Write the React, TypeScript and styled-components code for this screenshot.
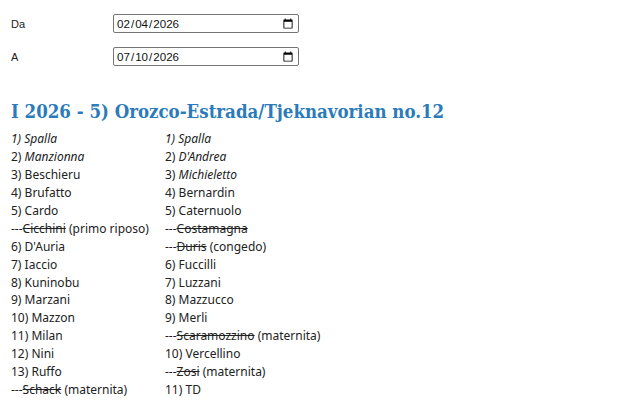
import { createGlobalStyle, styled } from 'styled-components';

const Global = createGlobalStyle`
html, body {
  margin: 0;
  padding: 0;
  background: #fff;
}
body {
  font-family: "Noto Sans", "Open Sans", sans-serif;
  color: #222;
}
`

type Player = { n?: string; name: string; italic?: boolean; out?: boolean; note?: string }

const left: Player[] = [
  { n: '1)', name: 'Spalla', italic: true },
  { n: '2)', name: 'Manzionna', italic: true },
  { n: '3)', name: 'Beschieru' },
  { n: '4)', name: 'Brufatto' },
  { n: '5)', name: 'Cardo' },
  { name: 'Cicchini', out: true, note: '(primo riposo)' },
  { n: '6)', name: "D'Auria" },
  { n: '7)', name: 'Iaccio' },
  { n: '8)', name: 'Kuninobu' },
  { n: '9)', name: 'Marzani' },
  { n: '10)', name: 'Mazzon' },
  { n: '11)', name: 'Milan' },
  { n: '12)', name: 'Nini' },
  { n: '13)', name: 'Ruffo' },
  { name: 'Schack', out: true, note: '(maternita)' },
]

const right: Player[] = [
  { n: '1)', name: 'Spalla', italic: true },
  { n: '2)', name: "D'Andrea", italic: true },
  { n: '3)', name: 'Michieletto', italic: true },
  { n: '4)', name: 'Bernardin' },
  { n: '5)', name: 'Caternuolo' },
  { name: 'Costamagna', out: true },
  { name: 'Duris', out: true, note: '(congedo)' },
  { n: '6)', name: 'Fuccilli' },
  { n: '7)', name: 'Luzzani' },
  { n: '8)', name: 'Mazzucco' },
  { n: '9)', name: 'Merli' },
  { name: 'Scaramozzino', out: true, note: '(maternita)' },
  { n: '10)', name: 'Vercellino' },
  { name: 'Zosi', out: true, note: '(maternita)' },
  { n: '11)', name: 'TD' },
]

const Row = ({ p }: { p: Player }) => {
  if (p.out) {
    return (
      <Line>
        ---<Struck>{p.name}</Struck>{p.note ? ' ' + p.note : ''}
      </Line>
    )
  }
  // the first chair is written all in italics, number included
  if (p.n === '1)' && p.italic) {
    return <Line><Name $italic>{p.n} {p.name}</Name></Line>
  }
  return (
    <Line>
      {p.n} <Name $italic={p.italic}>{p.name}</Name>
    </Line>
  )
}

const App = () => {
  return (
    <Page>
      <Global />
      <Form>
        <Label>Da</Label>
        <DateInput type="date" defaultValue="2026-02-04" />
        <Label>A</Label>
        <DateInput type="date" defaultValue="2026-07-10" />
      </Form>
      <Title>I 2026 - 5) Orozco-Estrada/Tjeknavorian no.12</Title>
      <Columns>
        <Column>
          {left.map((p, i) => <Row key={i} p={p} />)}
        </Column>
        <Column>
          {right.map((p, i) => <Row key={i} p={p} />)}
        </Column>
      </Columns>
    </Page>
  )
}

export default App;

const Page = styled.div`
padding: 0 11px;
`
const Form = styled.div`
display: grid;
grid-template-columns: 102px 186px;
grid-auto-rows: 19px;
row-gap: 14px;
align-items: center;
padding-top: 14px;
`
const Label = styled.span`
font-family: "Liberation Sans", Arial, sans-serif;
font-size: 11px;
color: #222;
`
const DateInput = styled.input`
box-sizing: border-box;
width: 186px;
height: 19px;
margin: 0;
padding: 0 2px;
font-family: "Liberation Sans", Arial, sans-serif;
font-size: 11.6px;
color: #111;
border: 1px solid #767676;
border-radius: 2px;
background: #fff;
`
const Title = styled.h1`
margin: 33px 0 0;
font-family: "DejaVu Serif Condensed", "DejaVu Serif", serif;
font-size: 18.5px;
line-height: 26px;
font-weight: 700;
color: #2b7bbb;
white-space: nowrap;
`
const Columns = styled.div`
display: flex;
margin-top: 5px;
`
const Column = styled.div`
width: 154px;
display: flex;
flex-direction: column;
`
const Line = styled.div`
font-size: 12px;
line-height: 17.93px;
white-space: nowrap;
color: #222;
`
const Name = styled.span<{ $italic?: boolean }>`
font-style: ${p => (p.$italic ? 'italic' : 'normal')};
`
const Struck = styled.span`
text-decoration: line-through;
`
